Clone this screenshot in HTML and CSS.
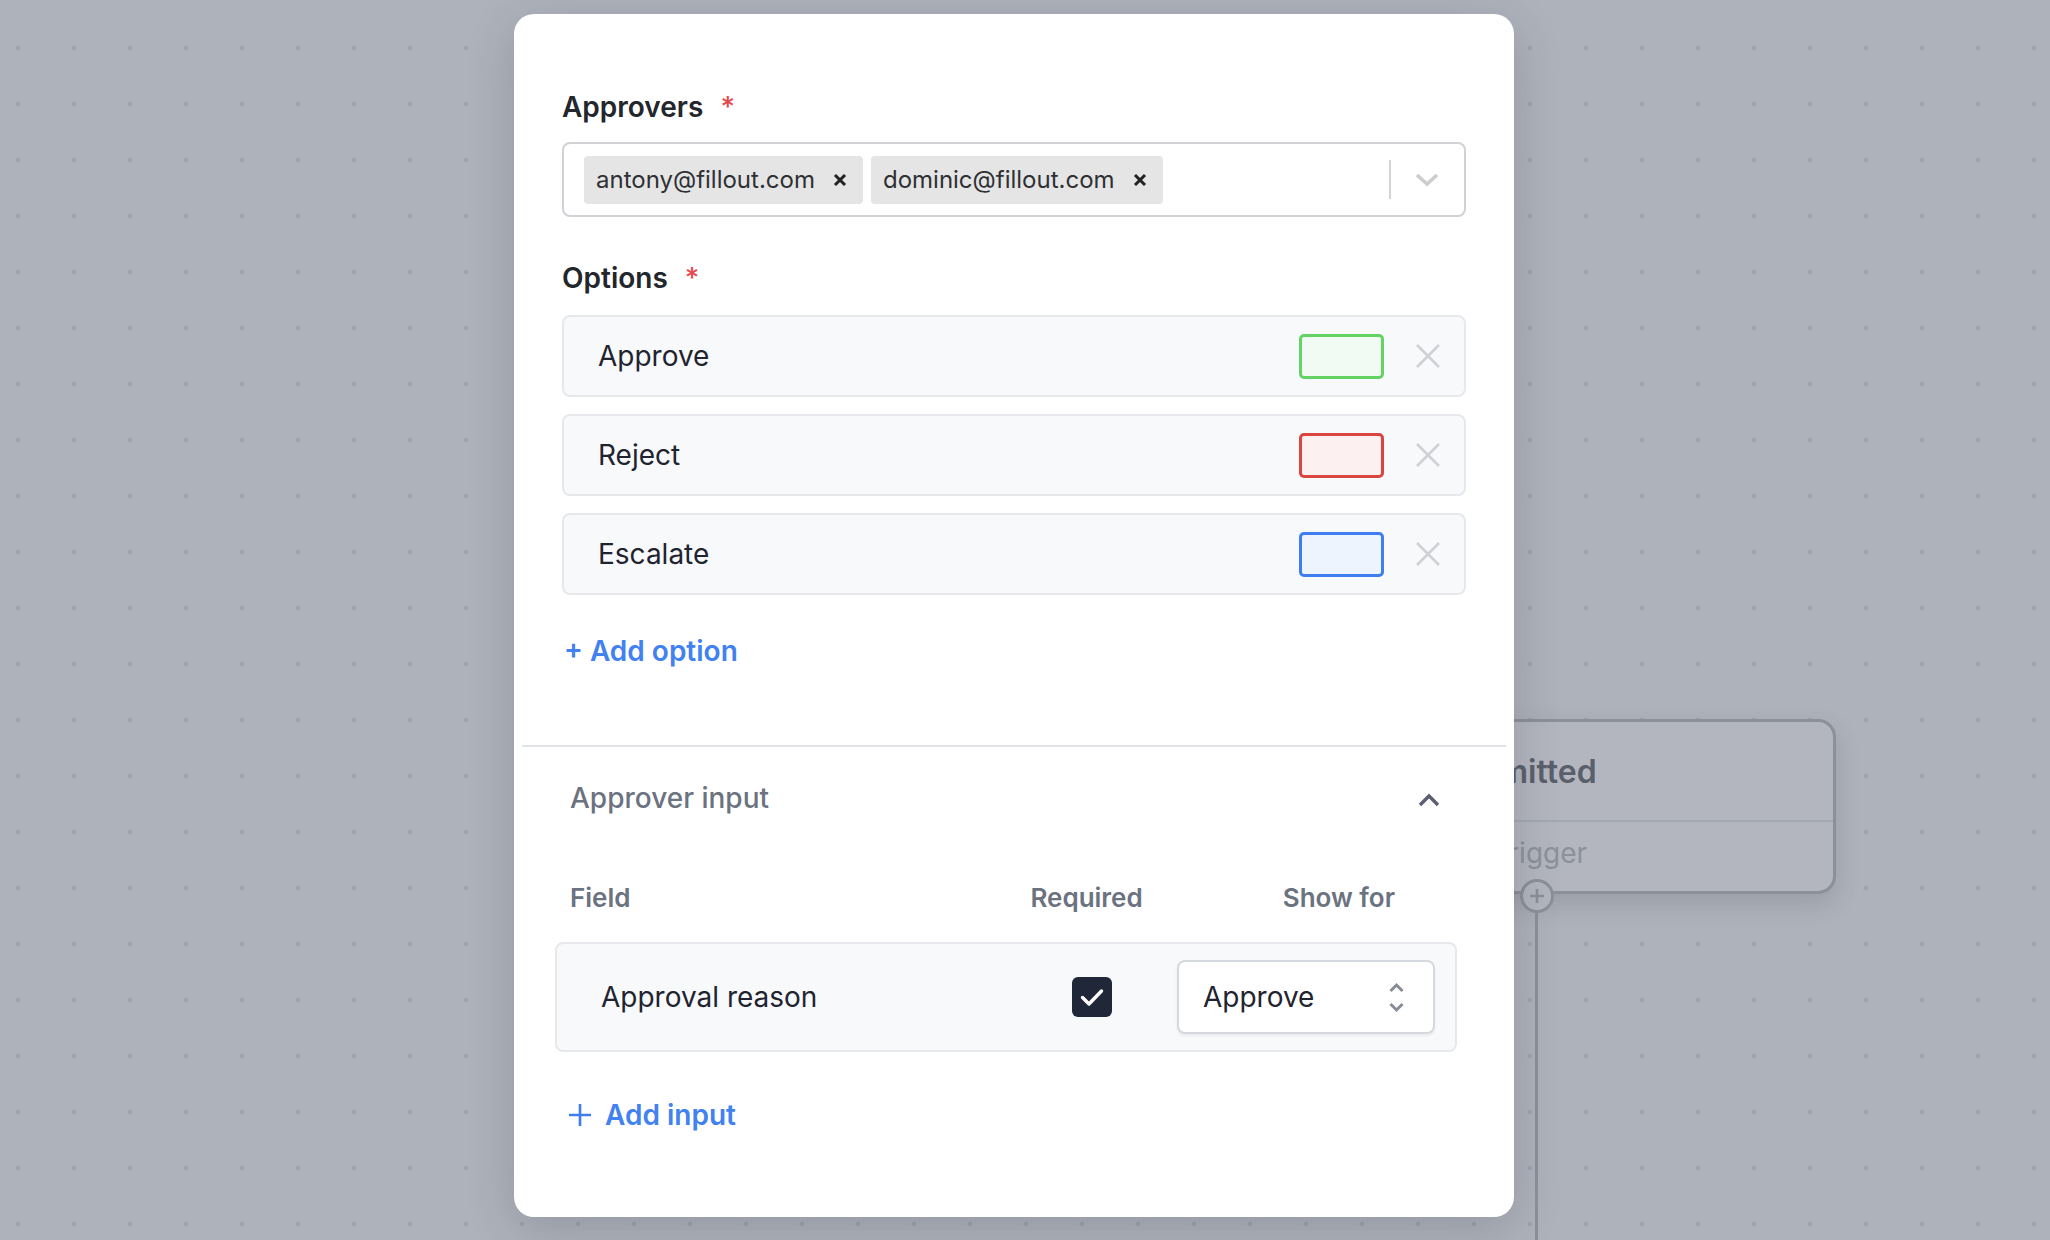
FILE: index.html
```html
<!DOCTYPE html>
<html>
<head>
<meta charset="UTF-8">
<title>Approval step</title>
<link rel="stylesheet" href="styles.css">
</head>
<body>
<!-- холст с узлами -->
<div class="canvas">
	<div class="node">
		<div class="node_head">Form submitted</div>
		<div class="node_foot">Fillout form trigger</div>
	</div>
	<div class="node_plus">
		<svg width="18" height="18" viewBox="0 0 18 18"><path d="M9 2V16M2 9H16" stroke="#8b909b" stroke-width="2.6" fill="none"/></svg>
	</div>
	<div class="node_line"></div>
</div>

<!-- окно настройки шага -->
<div class="popup_step">
	<div class="step_top">
		<div class="field_label">Approvers <span class="req">*</span></div>
		<div class="select_box">
			<div class="chip">
				<span>antony@fillout.com</span>
				<svg width="14" height="14" viewBox="0 0 14 14"><path d="M2 2L12 12M12 2L2 12" stroke="#222" stroke-width="3" fill="none"/></svg>
			</div>
			<div class="chip">
				<span>dominic@fillout.com</span>
				<svg width="14" height="14" viewBox="0 0 14 14"><path d="M2 2L12 12M12 2L2 12" stroke="#222" stroke-width="3" fill="none"/></svg>
			</div>
			<div class="select_sep"></div>
			<svg class="select_arrow" width="24" height="14" viewBox="0 0 24 14"><path d="M2 2L12 11L22 2" stroke="#cdcdcd" stroke-width="3.6" fill="none"/></svg>
		</div>

		<div class="field_label options_label">Options <span class="req">*</span></div>
		<div class="option_list">
			<div class="option_row">
				<span class="option_name">Approve</span>
				<div class="swatch swatch_green"></div>
				<svg width="26" height="24" viewBox="0 0 26 24"><path d="M2 1L24 23M24 1L2 23" stroke="#cfd1d5" stroke-width="2.6" fill="none"/></svg>
			</div>
			<div class="option_row">
				<span class="option_name">Reject</span>
				<div class="swatch swatch_red"></div>
				<svg width="26" height="24" viewBox="0 0 26 24"><path d="M2 1L24 23M24 1L2 23" stroke="#cfd1d5" stroke-width="2.6" fill="none"/></svg>
			</div>
			<div class="option_row">
				<span class="option_name">Escalate</span>
				<div class="swatch swatch_blue"></div>
				<svg width="26" height="24" viewBox="0 0 26 24"><path d="M2 1L24 23M24 1L2 23" stroke="#cfd1d5" stroke-width="2.6" fill="none"/></svg>
			</div>
		</div>
		<div class="add_link">+ Add option</div>
	</div>

	<div class="step_divider"></div>

	<div class="step_bottom">
		<div class="section_head">
			<span>Approver input</span>
			<svg width="22" height="14" viewBox="0 0 22 14"><path d="M2 12L11 3L20 12" stroke="#5b6070" stroke-width="3.4" fill="none"/></svg>
		</div>
		<div class="input_head">
			<span>Field</span>
			<span class="col_req">Required</span>
			<span class="col_show">Show for</span>
		</div>
		<div class="input_row">
			<span class="input_name">Approval reason</span>
			<div class="checkbox">
				<svg width="40" height="40" viewBox="0 0 40 40"><path d="M10.5 20.5L17 27L29.5 14" stroke="#fff" stroke-width="3.4" fill="none" stroke-linecap="round" stroke-linejoin="round"/></svg>
			</div>
			<div class="show_select">
				<span>Approve</span>
				<svg width="17" height="31" viewBox="0 0 17 31"><path d="M2.5 9L8.5 3L14.5 9M2.5 22L8.5 28L14.5 22" stroke="#878c97" stroke-width="3" fill="none"/></svg>
			</div>
		</div>
		<div class="add_link add_input">
			<svg width="24" height="24" viewBox="0 0 24 24"><path d="M12 1V23M1 12H23" stroke="#3f7ef0" stroke-width="2.6" fill="none"/></svg>
			<span>Add input</span>
		</div>
	</div>
</div>
</body>
</html>
```

FILE: styles.css
```css
/* общий фон — точечная сетка */
body {
	margin: 0;
	width: 2050px;
	height: 1240px;
	overflow: hidden;
	position: relative;
	font-family: "Inter", "Noto Sans", sans-serif;
	background-color: #aeb2bb;
	background-image: radial-gradient(circle, #9fa4ae 2px, transparent 2.7px);
	background-size: 56px 56px;
	background-position: -10px 20px;
}

/* узел на холсте (под затемнением) */
.node {
	position: absolute;
	left: 1312px;
	top: 719px;
	width: 524px;
	height: 175px;
	box-sizing: border-box;
	border: 3px solid #8b909b;
	border-radius: 18px;
	background: #b3b6be;
	box-shadow: 0 10px 24px rgba(60, 65, 80, 0.18);
}
.node_head {
	height: 100px;
	box-sizing: border-box;
	padding-left: 40px;
	display: flex;
	align-items: center;
	font-size: 32px;
	font-weight: 600;
	color: #5a606b;
	border-bottom: 2px solid #a4a8b1;
}
.node_foot {
	padding: 13px 0 0 27px;
	font-size: 28px;
	line-height: 36px;
	color: #8c919b;
}
.node_plus {
	position: absolute;
	left: 1520px;
	top: 879px;
	width: 34px;
	height: 34px;
	box-sizing: border-box;
	border: 3px solid #8b909b;
	border-radius: 50%;
	background: #b3b6be;
	display: flex;
	align-items: center;
	justify-content: center;
}
.node_line {
	position: absolute;
	left: 1535px;
	top: 913px;
	width: 3px;
	height: 327px;
	background: #8b909b;
}

/* модальное окно */
.popup_step {
	position: absolute;
	left: 514px;
	top: 14px;
	width: 1000px;
	height: 1203px;
	background: #fff;
	border-radius: 20px;
	box-shadow: 0 12px 48px rgba(40, 45, 60, 0.2);
}
.step_top {
	padding: 75px 48px 76px;
}
.field_label {
	font-size: 28px;
	line-height: 36px;
	font-weight: 600;
	color: #23262b;
}
.field_label .req {
	color: #e5484d;
	margin-left: 10px;
	font-weight: 500;
}
.select_box {
	margin-top: 17px;
	height: 75px;
	box-sizing: border-box;
	border: 2px solid #d0d2d6;
	border-radius: 8px;
	padding: 0 25px 0 20px;
	display: flex;
	align-items: center;
	gap: 8px;
}
.chip {
	height: 48px;
	display: flex;
	align-items: center;
	gap: 18px;
	padding: 0 16px 0 12px;
	background: #e5e5e5;
	border-radius: 4px;
	font-size: 24px;
	color: #2e3034;
}
.select_sep {
	margin-left: auto;
	width: 2px;
	height: 39px;
	background: #d3d3d3;
}
.select_arrow {
	margin-left: 16px;
}
.options_label {
	margin-top: 43px;
}
.option_list {
	margin-top: 19px;
	display: flex;
	flex-direction: column;
	gap: 17px;
}
.option_row {
	height: 82px;
	box-sizing: border-box;
	border: 2px solid #e6e8ec;
	border-radius: 8px;
	background: #f8f9fb;
	padding: 0 23px 0 34px;
	display: flex;
	align-items: center;
	gap: 31px;
}
.option_name {
	flex: 1;
	font-size: 28px;
	color: #1f2430;
}
.swatch {
	width: 85px;
	height: 45px;
	box-sizing: border-box;
	border: 3px solid;
	border-radius: 5px;
}
.swatch_green { border-color: #63d363; background: #f2fbf3; }
.swatch_red { border-color: #db4540; background: #fcf1f0; }
.swatch_blue { border-color: #3f7ef0; background: #eef4fe; }

.add_link {
	margin-top: 38px;
	margin-left: 2px;
	font-size: 28px;
	line-height: 36px;
	font-weight: 600;
	color: #4181f0;
}

.step_divider {
	margin: 0 8px;
	height: 2px;
	background: #e1e3e7;
}

/* блок "Approver input" */
.step_bottom {
	padding: 33px 57px 0 41px;
}
.section_head {
	display: flex;
	align-items: center;
	justify-content: space-between;
	padding: 0 17px 0 15px;
	font-size: 28px;
	line-height: 36px;
	font-weight: 500;
	color: #6b7280;
}
.section_head svg {
	margin-top: 3px;
}
.input_head {
	margin-top: 66px;
	display: flex;
	padding: 0 62px 0 15px;
	font-size: 26px;
	line-height: 32px;
	font-weight: 600;
	color: #6b7280;
}
.input_head .col_req {
	margin-left: auto;
}
.input_head .col_show {
	margin-left: 140px;
}
.input_row {
	margin-top: 28px;
	height: 110px;
	box-sizing: border-box;
	border: 2px solid #e6e8ec;
	border-radius: 8px;
	background: #f8f9fb;
	padding: 0 20px 0 44px;
	display: flex;
	align-items: center;
}
.input_name {
	flex: 1;
	font-size: 28px;
	color: #1f2430;
}
.checkbox {
	width: 40px;
	height: 40px;
	border-radius: 6px;
	background: #1f2738;
	margin-right: 65px;
}
.checkbox svg {
	display: block;
}
.show_select {
	width: 258px;
	height: 74px;
	box-sizing: border-box;
	border: 2px solid #d5d8dc;
	border-radius: 8px;
	background: #fff;
	box-shadow: 0 2px 3px rgba(0, 0, 0, 0.06);
	padding: 0 28px 0 24px;
	display: flex;
	align-items: center;
	justify-content: space-between;
	font-size: 28px;
	color: #1f2430;
}
.add_input {
	margin-top: 45px;
	margin-left: 13px;
	display: flex;
	align-items: center;
	gap: 13px;
}
```
